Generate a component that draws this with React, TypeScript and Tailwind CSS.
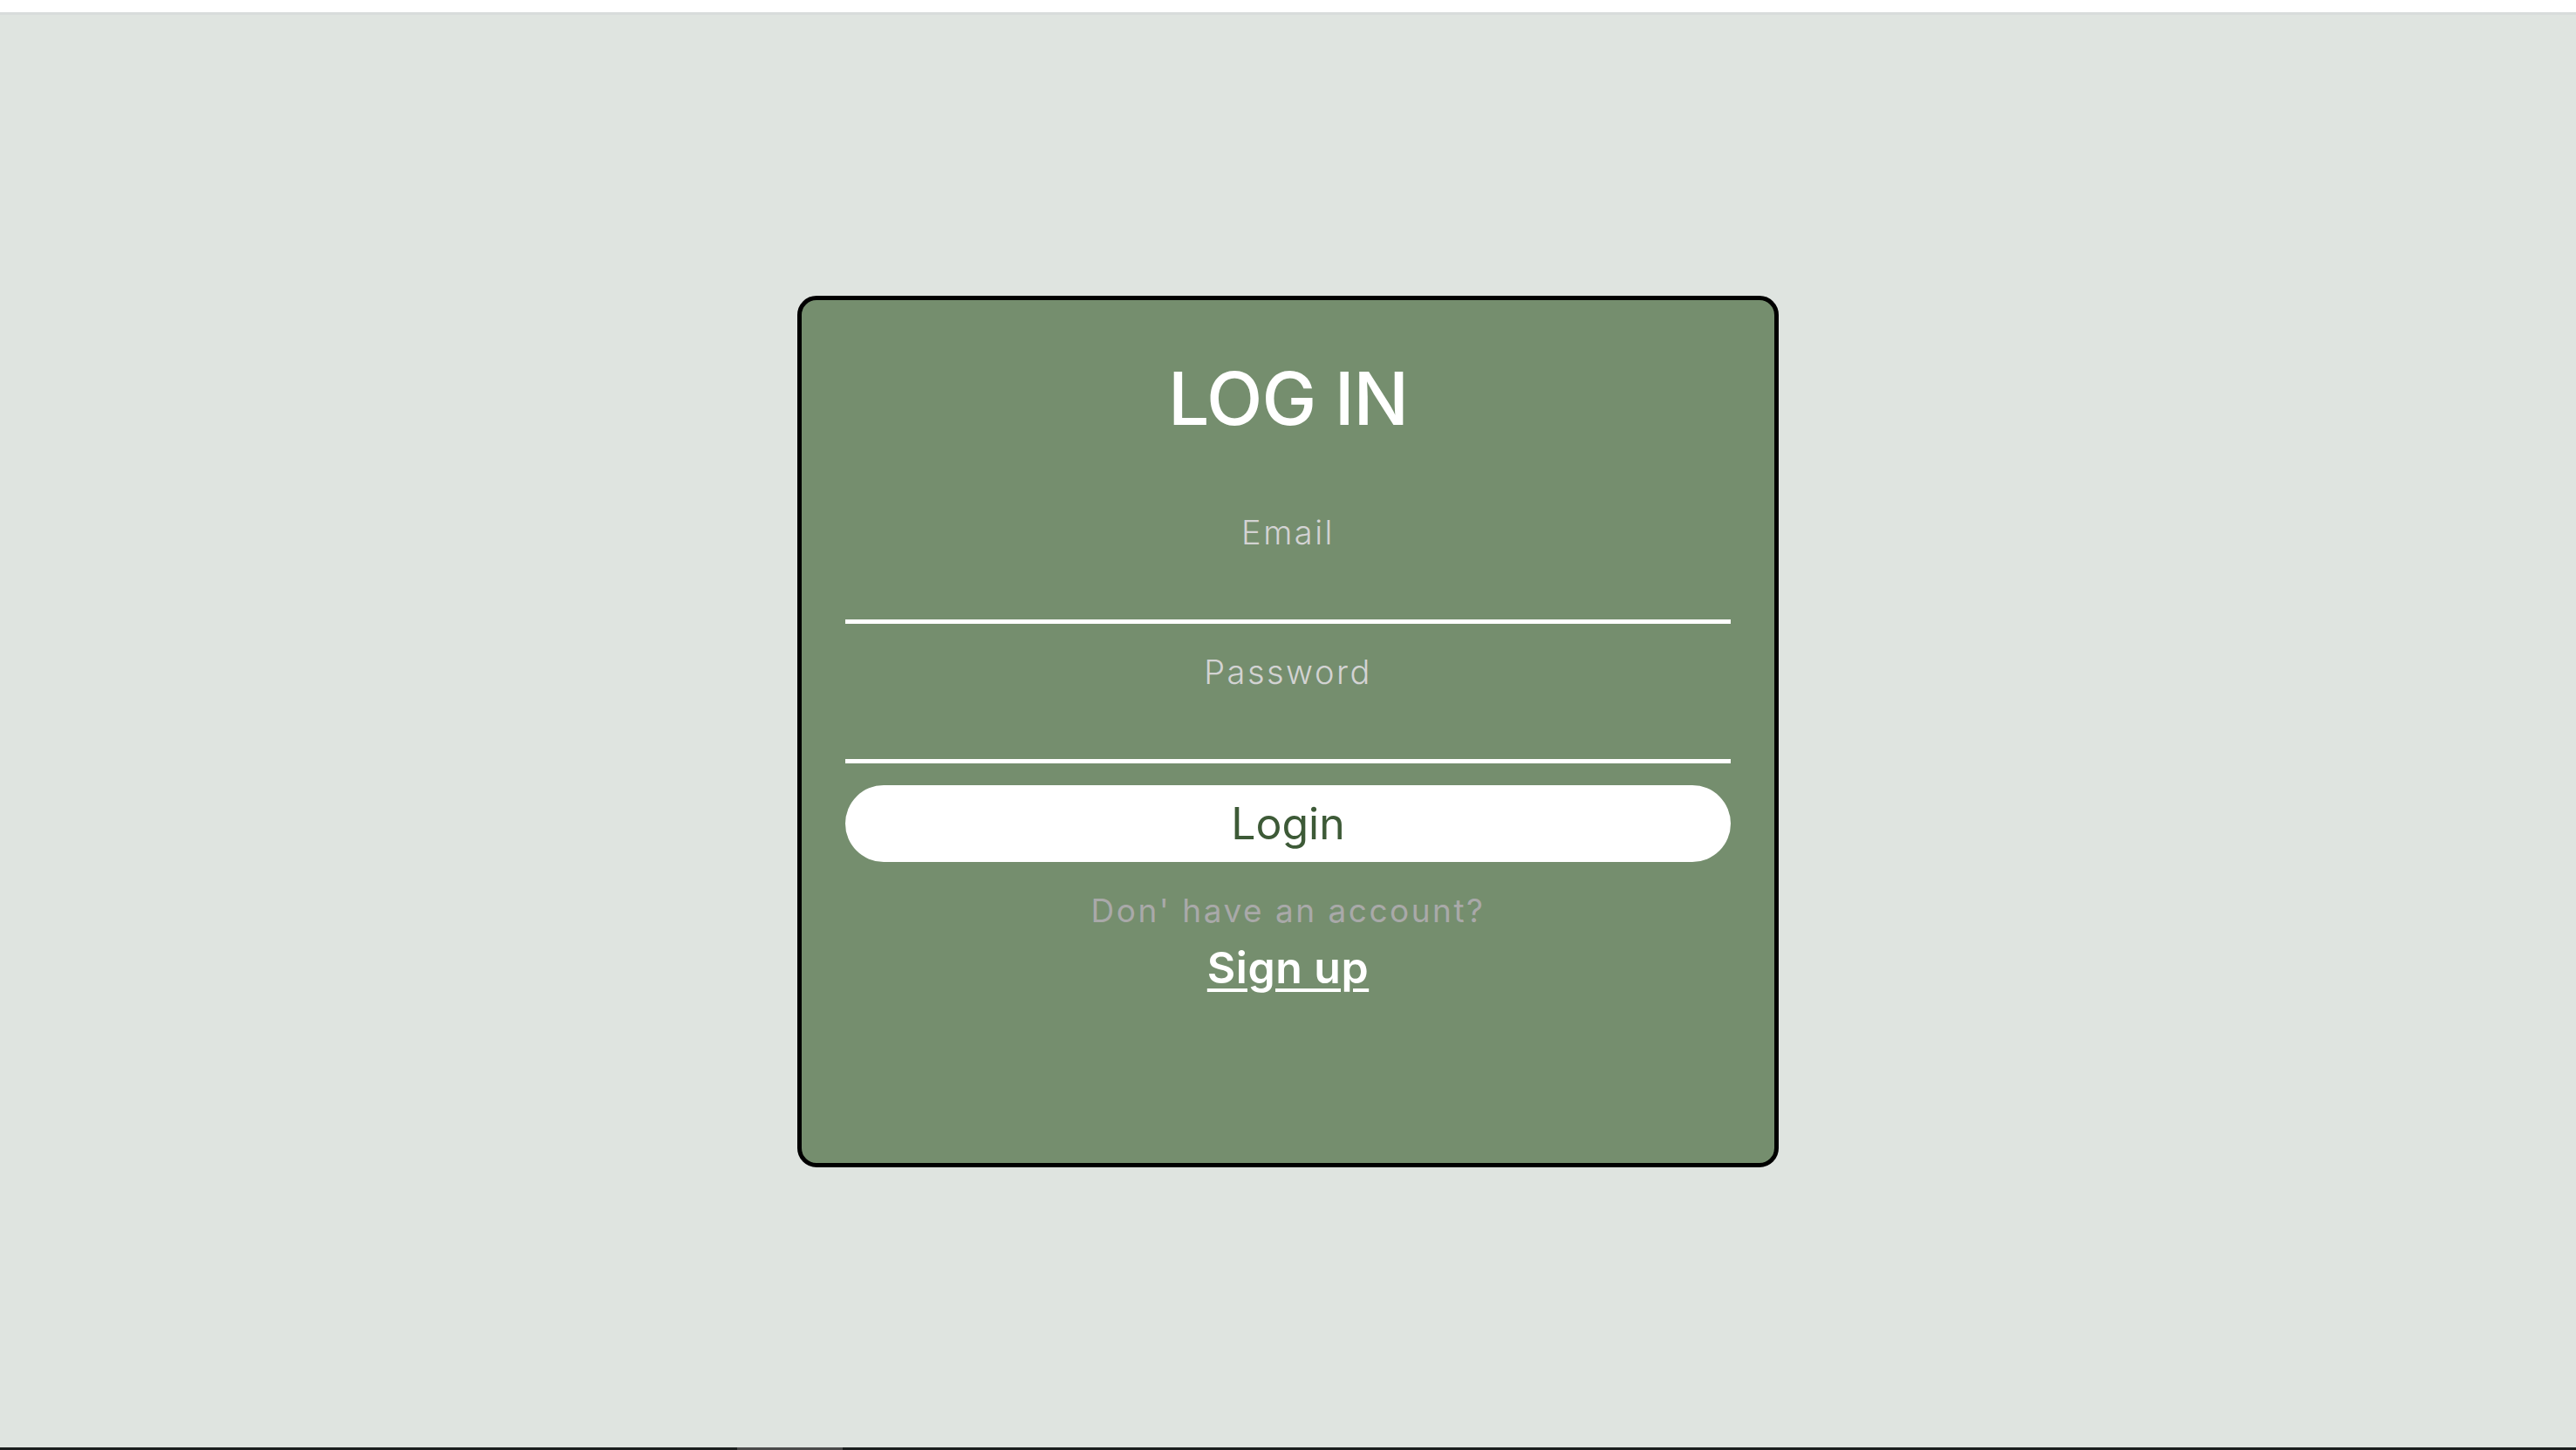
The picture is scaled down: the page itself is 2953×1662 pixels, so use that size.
import React from 'react';

// Component - LoginPage
export function LoginPage() {
    // State
    const [email, setEmail] = React.useState('');
    const [password, setPassword] = React.useState('');

    // Render the component
    return (
        <div className="flex h-[1662px] w-full flex-col overflow-hidden font-['Inter',sans-serif]">
            {/* Top strip */}
            <div className="h-[14px] bg-white" />
            <div className="h-[3px] bg-[#d8dcdb]" />

            {/* Main */}
            <main className="flex h-[1642px] items-center justify-center bg-[#dfe4e0]">
                <form
                    className="flex h-[999px] w-[1125px] flex-col rounded-[22px] border-[5px] border-black bg-[#758e6e] px-[50px] pt-[71px]"
                    onSubmit={function (event) {
                        event.preventDefault();
                    }}
                >
                    <h1 className="text-center text-[84px] leading-none font-medium tracking-[-1px] text-white">LOG IN</h1>

                    {/* Email */}
                    <label className="mt-[92px] text-center text-[38px] leading-none font-light tracking-[2.5px] text-[#d3d3d3]">Email</label>
                    <input
                        type="email"
                        value={email}
                        onChange={function (event) {
                            setEmail(event.target.value);
                        }}
                        className="h-[86px] w-full border-b-[5px] border-white bg-transparent text-center text-[38px] text-white outline-none"
                    />

                    {/* Password */}
                    <label className="mt-[36px] text-center text-[38px] leading-none font-light tracking-[2.5px] text-[#d3d3d3]">Password</label>
                    <input
                        type="password"
                        value={password}
                        onChange={function (event) {
                            setPassword(event.target.value);
                        }}
                        className="h-[86px] w-full border-b-[5px] border-white bg-transparent text-center text-[38px] text-white outline-none"
                    />

                    {/* Login */}
                    <button type="submit" className="mt-[25px] h-[88px] w-full rounded-full bg-white text-[50px] leading-none font-normal text-[#3d5a37]">
                        Login
                    </button>

                    <p className="mt-[37px] text-center text-[37px] leading-none font-normal tracking-[2.5px] text-[#a9a9a9]">Don' have an account?</p>
                    <a
                        href="#"
                        className="mt-[22px] self-center text-[50px] leading-none font-semibold tracking-[0.5px] text-white underline decoration-[4px] underline-offset-[6px]"
                    >
                        Sign up
                    </a>
                </form>
            </main>

            {/* Bottom strip */}
            <div className="flex h-[3px] bg-[#1a1e1e]">
                <div className="ml-[845px] w-[121px] bg-[#4a4a4a]" />
            </div>
        </div>
    );
}

// Export - Default
export default LoginPage;
